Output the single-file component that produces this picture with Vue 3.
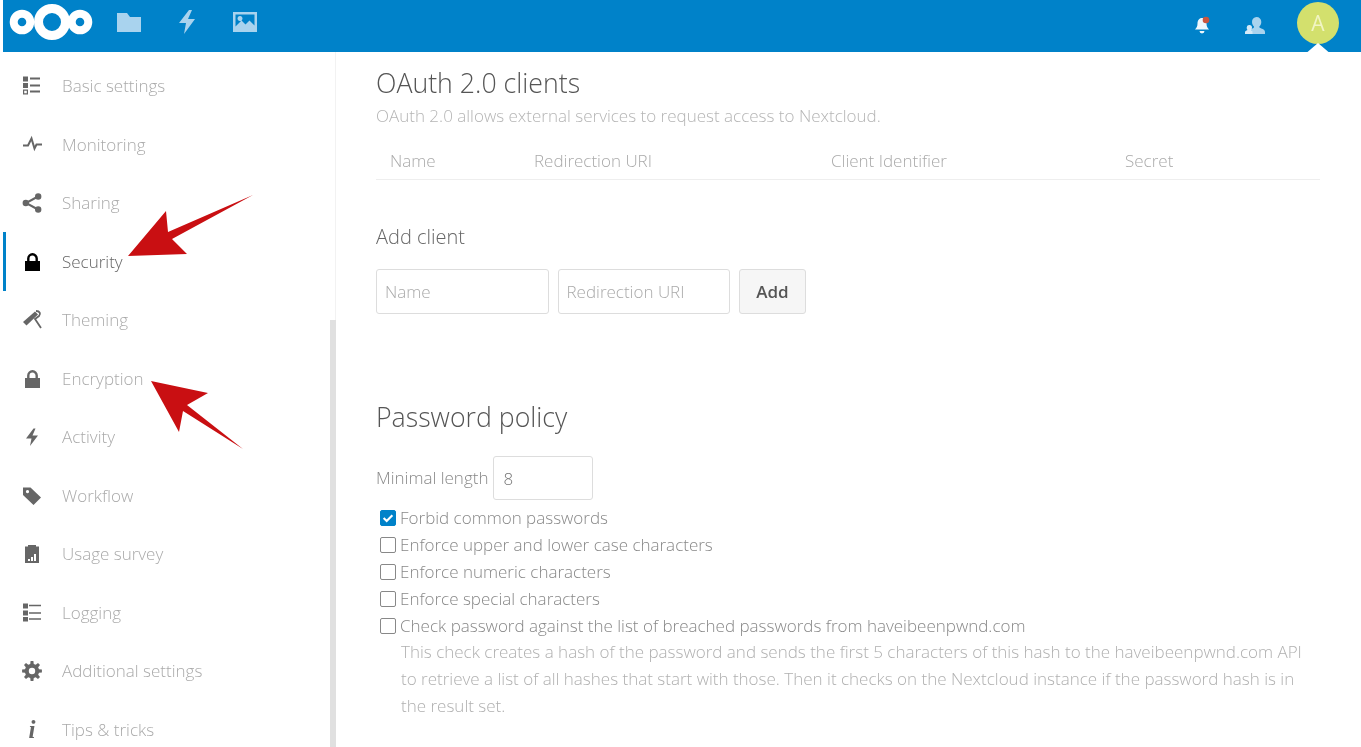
<script setup>
function gearPath() {
  const cx = 10, cy = 10, teeth = 8
  let d = ''
  for (let i = 0; i < teeth; i++) {
    const a = (i / teeth) * Math.PI * 2
    const s = Math.PI / teeth
    const pts = [
      [7.2, a - s * 0.62],
      [10, a - s * 0.36],
      [10, a + s * 0.36],
      [7.2, a + s * 0.62]
    ]
    for (const [r, t] of pts) {
      d += (d ? 'L' : 'M') + (cx + r * Math.cos(t)).toFixed(2) + ' ' + (cy + r * Math.sin(t)).toFixed(2)
    }
  }
  return d + 'Z M10 6.8a3.2 3.2 0 1 0 0 6.4a3.2 3.2 0 1 0 0-6.4Z'
}

const lockPaths = [
  { d: 'M3 9h15v10H3z', fill: 'currentColor' },
  { d: 'M6.300 9.500V6.500a4.200 4.200 0 0 1 8.400 0v3', fill: 'none', stroke: 'currentColor', 'stroke-width': 2.4 }
]

const navItems = [
  {
    label: 'Basic settings',
    paths: [
      { d: 'M1 0.500h5v5H1zM8 1.500h10v2H8zM1 7h5v5H1zM8 8.500h10v2H8zM8 14.500h10v2H8z', fill: 'currentColor' },
      { d: 'M1.600 14.100h3.800v3.800H1.600z', fill: 'none', stroke: 'currentColor', 'stroke-width': 1.2 }
    ]
  },
  {
    label: 'Monitoring',
    paths: [
      { d: 'M1 10.500h5l3.500-7 3 10 2-4H20', fill: 'none', stroke: 'currentColor', 'stroke-width': 2 }
    ]
  },
  {
    label: 'Sharing',
    paths: [
      { d: 'M16 3.500L4 10l12 6.500', fill: 'none', stroke: 'currentColor', 'stroke-width': 2 },
      { d: 'M13 3.500a3.200 3.200 0 1 0 6.400 0a3.200 3.200 0 1 0-6.400 0ZM0.600 10a3.200 3.200 0 1 0 6.400 0a3.200 3.200 0 1 0-6.400 0ZM13 16.500a3.200 3.200 0 1 0 6.400 0a3.200 3.200 0 1 0-6.400 0Z', fill: 'currentColor' }
    ]
  },
  { label: 'Security', active: true, paths: lockPaths },
  {
    label: 'Theming',
    paths: [
      { d: 'M1 12L13 1.500l3 3L4.500 15.500z', fill: 'currentColor' },
      { d: 'M14 1c4 0 5 3 3 5l-4 3 6 9', fill: 'none', stroke: 'currentColor', 'stroke-width': 1.8 }
    ]
  },
  { label: 'Encryption', paths: lockPaths },
  {
    label: 'Activity',
    paths: [{ d: 'M11.500 1.500L4 11.500h5.500L8 19l8-10.500h-5.500l3-7z', fill: 'currentColor' }]
  },
  {
    label: 'Workflow',
    paths: [{ d: 'M1 1.500h7.500L19 11.500l-7.500 7.500L1 9zM5.500 4a1.600 1.600 0 1 0 .01 0z', fill: 'currentColor', 'fill-rule': 'evenodd' }]
  },
  {
    label: 'Usage survey',
    paths: [{ d: 'M3 2.500h3V1h8v1.500h3V19H3zM6 15v2h2v-2zM9 13v4h2v-4zM12 10v7h2v-7z', fill: 'currentColor', 'fill-rule': 'evenodd' }]
  },
  {
    label: 'Logging',
    paths: [
      { d: 'M1 0.500h5v5H1zM1 7.500h5v5H1zM1 14h5v4.500H1z', fill: 'currentColor' },
      { d: 'M7 2.500h12M7 10h12M7 16h12', fill: 'none', stroke: 'currentColor', 'stroke-width': 1.3 }
    ]
  },
  {
    label: 'Additional settings',
    paths: [{ d: gearPath(), fill: 'currentColor', 'fill-rule': 'evenodd' }]
  },
  { label: 'Tips & tricks', info: true, paths: [] }
]

const columns = ['Name', 'Redirection URI', 'Client Identifier', 'Secret']

const policies = [
  { label: 'Forbid common passwords', checked: true },
  { label: 'Enforce upper and lower case characters' },
  { label: 'Enforce numeric characters' },
  { label: 'Enforce special characters' },
  { label: 'Check password against the list of breached passwords from haveibeenpwnd.com' }
]
</script>

<template>
  <div class="page">
    <header class="topbar">
      <div class="brand">
        <svg class="logo" width="90" height="42" viewBox="0 0 90 42" aria-label="Nextcloud">
          <g fill="none" stroke="#fff">
            <circle cx="16" cy="21" r="8.300" stroke-width="8" />
            <circle cx="46" cy="21" r="13.500" stroke-width="9" />
            <circle cx="74" cy="21" r="8.300" stroke-width="8" />
          </g>
        </svg>
        <svg class="app-icon" width="24" height="20" viewBox="0 0 24 20">
          <path d="M0 1h10l3 4h11v15H0z" fill="#a9d3ee" />
        </svg>
        <svg class="app-icon" width="18" height="24" viewBox="0 0 18 24">
          <path d="M11 0L1 13h7l-2 11 11-15h-7l4-9z" fill="#a9d3ee" />
        </svg>
        <svg class="app-icon" width="24" height="20" viewBox="0 0 24 20">
          <path d="M0 0h24v20H0zM2.500 2.500v12l6-6 4 4 4-4 5 5V2.500zM7 4a2.500 2.500 0 1 0 .01 0z" fill="#a9d3ee" fill-rule="evenodd" />
        </svg>
      </div>
      <div class="actions">
        <span class="bell">
          <svg width="18" height="20" viewBox="0 0 18 20">
            <path d="M9 2c3 0 4.500 2.500 4.500 5.500 0 3 1 4.500 2.500 6H2c1.500-1.500 2.500-3 2.500-6C4.500 4.500 6 2 9 2zM6.500 15h5a2.500 2.500 0 0 1-5 0z" fill="#eef7fc" />
            <circle cx="13" cy="4" r="3.300" fill="#c8553f" />
          </svg>
        </span>
        <svg class="contacts" width="20" height="20" viewBox="0 0 20 20">
          <path d="M11.500 1a4.800 4.800 0 0 1 4.800 5c0 2-1 3.500-2 4.500 0 1 .5 1.500 2 2 2 .7 3.700 1.500 3.700 3.500v2H7v-2c0-1.500-1-2-2-2.500l3.500-1.500c.5-.5.500-1 .500-1.500-1-1-2-2.500-2-4.500A4.800 4.800 0 0 1 11.500 1z" fill="#a9d3ee" />
          <path d="M4.500 9a2.500 2.500 0 0 1 2.500 2.500c0 1-.5 2-1 2.500 1 .5 1.500 1 1.500 2.500V18H0v-1.500C0 15 1 14.500 2.500 14c-.5-.5-.8-1.500-.8-2.500A2.500 2.500 0 0 1 4.500 9z" fill="#d5eaf7" />
        </svg>
        <div class="avatar">A</div>
      </div>
    </header>

    <div class="body">
      <nav class="sidebar">
        <a v-for="item in navItems" :key="item.label" class="nav-item" :class="{ active: item.active }">
          <span v-if="item.info" class="nav-icon info">i</span>
          <svg v-else class="nav-icon" width="20" height="20" viewBox="0 0 20 20">
            <path v-for="(p, i) in item.paths" :key="i" v-bind="p" />
          </svg>
          <span class="nav-label">{{ item.label }}</span>
        </a>
      </nav>

      <main class="content">
        <h2 class="title">OAuth 2.0 clients</h2>
        <p class="desc">OAuth 2.0 allows external services to request access to Nextcloud.</p>

        <div class="client-table">
          <span v-for="c in columns" :key="c">{{ c }}</span>
        </div>

        <h3 class="add-title">Add client</h3>
        <form class="add-form" @submit.prevent>
          <input class="field" placeholder="Name" />
          <input class="field" placeholder="Redirection URI" />
          <button class="add-btn" type="button">Add</button>
        </form>

        <h2 class="title policy-title">Password policy</h2>
        <div class="min-length">
          <label>Minimal length</label>
          <input class="length-input" value="8" />
        </div>

        <ul class="policy-list">
          <li v-for="p in policies" :key="p.label">
            <span class="check" :class="{ on: p.checked }">
              <svg v-if="p.checked" width="16" height="16" viewBox="0 0 16 16">
                <path d="M3 8l3.500 3.500L13 4.800" fill="none" stroke="#fff" stroke-width="2.400" />
              </svg>
            </span>
            {{ p.label }}
          </li>
        </ul>
        <p class="hint">This check creates a hash of the password and sends the first 5 characters of this hash to the haveibeenpwnd.com API to retrieve a list of all hashes that start with those. Then it checks on the Nextcloud instance if the password hash is in the result set.</p>
      </main>
    </div>

    <svg class="arrows" width="1361" height="747" viewBox="0 0 1361 747">
      <path d="M128 256L166 211L168 232L253 195L172 239L187 254Z" fill="#c90f12" />
      <path d="M151 381L208 393L187 405L243 449L183 411L179 432Z" fill="#c90f12" />
    </svg>
    <div class="scrollbar"></div>
  </div>
</template>

<style>
html, body {
  margin: 0;
  background: #fff;
  overflow: hidden;
}
</style>

<style scoped>
.page {
  position: relative;
  width: 1361px;
  height: 747px;
  overflow: hidden;
  padding-left: 3px;
  box-sizing: border-box;
  font-family: "Open Sans", "Liberation Sans", sans-serif;
  font-weight: 300;
  background: #fff;
  color: #aaa;
  filter: blur(0.4px);
}
.topbar {
  height: 52px;
  background: #0082c9;
  display: flex;
  align-items: center;
  justify-content: space-between;
}
.brand {
  display: flex;
  align-items: center;
  align-self: flex-start;
  height: 43px;
}
.logo {
  margin-left: 3px;
  margin-right: 21px;
}
.app-icon + .app-icon {
  margin-left: 37px;
}
.actions {
  display: flex;
  align-items: center;
  padding-right: 22px;
  position: relative;
}
.bell {
  display: flex;
  margin-right: 34px;
}
.contacts {
  margin-right: 32px;
}
.avatar {
  width: 42px;
  height: 42px;
  border-radius: 50%;
  background: #d3e06d;
  color: #f1f5c4;
  font-size: 21px;
  font-weight: 400;
  display: flex;
  align-items: center;
  justify-content: center;
  margin-top: -7px;
  position: relative;
}
.avatar::after {
  content: "";
  position: absolute;
  left: 50%;
  bottom: -11px;
  transform: translateX(-50%);
  border: 14px solid transparent;
  border-top: 0;
  border-bottom: 12px solid #fff;
}
.body {
  display: flex;
  height: 695px;
}
.sidebar {
  width: 333px;
  flex: none;
  box-sizing: border-box;
  padding-top: 4.750px;
  border-right: 1px solid #f2f2f2;
}
.nav-item {
  display: flex;
  align-items: center;
  height: 58.500px;
  box-sizing: border-box;
  padding-left: 16px;
  gap: 20px;
  font-size: 17px;
  color: #aaa;
  border-left: 3px solid transparent;
}
.nav-label {
  padding-bottom: 1px;
}
.nav-item.active {
  border-left-color: #0082c9;
  color: #666;
}
.nav-icon {
  flex: none;
  width: 20px;
  height: 20px;
  color: #666;
}
.nav-item.active .nav-icon {
  color: #000;
}
.info {
  font-family: "Liberation Serif", serif;
  font-style: italic;
  font-weight: 700;
  font-size: 25px;
  line-height: 20px;
  text-align: center;
}
.content {
  flex: 1;
  padding: 14px 41px 0 40px;
  min-width: 0;
}
.title {
  margin: 0;
  font-size: 26.700px;
  line-height: 34px;
  font-weight: 300;
  color: #555;
}
.desc {
  margin: 2px 0 0;
  font-size: 17px;
  line-height: 27px;
  color: #b5b5b5;
}
.client-table {
  margin-top: 10px;
  height: 41px;
  padding-top: 2px;
  display: grid;
  grid-template-columns: 144px 297px 294px 1fr;
  align-items: center;
  padding-left: 14px;
  border-bottom: 1px solid #eee;
  font-size: 17px;
  color: #aaa;
  box-sizing: border-box;
}
.add-title {
  margin: 43px 0 0;
  font-size: 20px;
  line-height: 28px;
  font-weight: 300;
  color: #666;
}
.add-form {
  display: flex;
  gap: 9px;
  margin-top: 18px;
}
.field {
  width: 172.500px;
  height: 45px;
  box-sizing: border-box;
  border: 1px solid #ddd;
  border-radius: 3px;
  padding: 0 8px;
  font: 300 17px "Open Sans", sans-serif;
  background: #fff;
  color: #888;
}
.field::placeholder {
  color: #aaa;
  opacity: 1;
}
.add-btn {
  width: 67px;
  height: 45px;
  border: 1px solid #ddd;
  border-radius: 3px;
  background: #f6f6f6;
  font: 600 17px "Open Sans", sans-serif;
  color: #555;
  padding: 0;
}
.policy-title {
  margin-top: 86px;
}
.min-length {
  display: flex;
  align-items: center;
  gap: 5px;
  margin-top: 22px;
  font-size: 17px;
  color: #888;
}
.min-length label {
  padding-bottom: 2px;
}
.length-input {
  width: 100px;
  height: 44px;
  box-sizing: border-box;
  border: 1px solid #ddd;
  border-radius: 3px;
  padding: 0 9px;
  font: 300 17px "Open Sans", sans-serif;
  color: #777;
}
.policy-list {
  list-style: none;
  margin: 4px 0 0;
  padding: 0;
}
.policy-list li {
  display: flex;
  align-items: center;
  gap: 4px;
  height: 27px;
  padding-left: 4px;
  font-size: 17px;
  color: #888;
}
.check {
  width: 16px;
  height: 16px;
  box-sizing: border-box;
  border: 1.500px solid #888;
  border-radius: 2px;
  display: flex;
  align-items: center;
  justify-content: center;
  flex: none;
}
.check.on {
  background: #0082c9;
  border-color: #0082c9;
}
.hint {
  margin: -1px 0 0 25px;
  font-size: 17px;
  line-height: 27px;
  color: #b0b0b0;
}
.arrows {
  position: absolute;
  left: 0;
  top: 0;
  pointer-events: none;
}
.scrollbar {
  position: absolute;
  left: 330px;
  top: 320px;
  width: 6px;
  height: 427px;
  background: #e0e0e0;
}
</style>
